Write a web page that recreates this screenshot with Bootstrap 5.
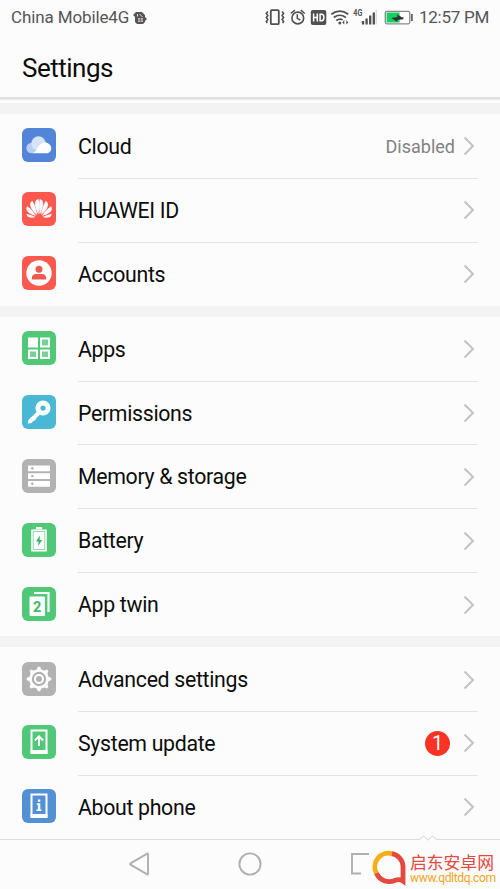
<!DOCTYPE html>
<html lang="en">
<head>
<meta charset="utf-8">
<meta name="viewport" content="width=device-width, initial-scale=1">
<title>Settings</title>
<link href="https://cdn.jsdelivr.net/npm/bootstrap@5.3.0/dist/css/bootstrap.min.css" rel="stylesheet">
<style>
body{font-family:Roboto,"Noto Sans CJK SC",sans-serif;background:#fcfcfc;color:#0c0c0c;width:500px;height:889px;overflow:hidden}
svg{display:block;flex:none}
.status{height:35px;padding:0 11px;font-size:17px;line-height:35px;color:#555}
.carrier{letter-spacing:-.12px}
.clock{width:75px;padding-left:5px;letter-spacing:-.25px}
.page-title{height:62px;padding-left:22px;font-size:26px;line-height:66px;font-weight:400;letter-spacing:-.5px}
.title-rule{height:3px;background:#dfdfdf;border-bottom:1px solid #ececec}
.title-space{height:3px}
.gap-band{height:11px;background:#f3f3f3}
.setting{height:63.9px;padding-left:22px;font-size:21.3px;letter-spacing:-.32px}
.setting .body{margin-left:22px;margin-right:22px;padding-right:3px;height:100%;border-top:1px solid #e4e4e4}
.setting:first-child .body{border-top-color:transparent}
.setting .label{padding-top:1px}
.app-icon{width:34px;height:34px;margin-top:-1px}
.state{font-size:18px;letter-spacing:0;color:#828282;margin-right:8px;padding-top:1px}
.count{width:25px;height:25px;font-size:20px;background:#fa3325;margin-right:13px}
.navkeys{height:50px;border-top:1px solid #dedede}
.key-back{margin-left:128px}.key-home{margin-left:88px}.key-recent{margin-left:88px}
.peak{left:418px;top:-6px}
.site{left:369px;top:8px;width:131px;height:41px;background:#fcfcfc}
.site-text{margin-left:3px;padding-top:5px}
.site-name{font-size:16.8px;line-height:20px;color:#e4483f;white-space:nowrap}
.site-url{font-size:12px;line-height:11px;letter-spacing:-.33px;color:#f0a51c;white-space:nowrap}
</style>
<script src="https://cdn.jsdelivr.net/npm/bootstrap@5.3.0/dist/js/bootstrap.bundle.min.js"></script>
</head>
<body>
<svg class="d-none"><symbol id="chev" viewBox="0 0 12 20"><path d="M1.500 1.500 10 10l-8.500 8.500" fill="none" stroke="#c3c3c3" stroke-width="2"/></symbol></svg>
<div class="d-flex flex-column">
<header>
<div class="status d-flex align-items-center">
  <span class="carrier">China Mobile4G</span>
  <svg class="ms-1" width="14" height="14" viewBox="0 0 14 14"><path d="M3 1h6l3 3v2l2 2-2 2v1l-2 2H4l-2-2V6L0 4z" fill="#555"/><path d="M4.500 3v2.500M6.500 3l3 3" stroke="#ddd"/><path d="M5 7h5v4H5z" fill="#bbb"/><path d="M7.500 7v4M5 9h5" stroke="#666" stroke-width=".7"/></svg>
  <svg class="ms-auto" width="149" height="24" viewBox="265.700 5.500 149 24" fill="none" stroke="#505050">
    <rect x="271.500" y="9.700" width="8" height="14" rx="1" stroke-width="1.800"/>
    <path d="M268.500 11l-1.500 2 1.500 2-1.500 2 1.500 2-1.500 2 1 1.500M282.800 11l1.500 2-1.500 2 1.500 2-1.500 2 1.500 2-1 1.500" stroke-width="1.600"/>
    <circle cx="298.500" cy="17.500" r="5.900" stroke-width="1.600"/><path d="M298 13.800v4l3 1.800M291.500 13l4-3.400M305.500 13l-4-3.400" stroke-width="1.500"/>
    <rect x="311.500" y="9.500" width="15.500" height="15" rx="2" fill="#505050" stroke="none"/>
    <path d="M314.300 13v8M318 13v8M314.300 17h3.700M320.800 13.800h1.500q2.300 0 2.300 3.200t-2.300 3.200h-1.500z" stroke="#fff" stroke-width="1.500"/>
    <path d="M332 13.800q8.500-6.400 17 0M334.500 17q6-4.500 12 0M337 20q3.500-2.500 6.300-.6" stroke-width="1.700"/>
    <circle cx="340.500" cy="22.500" r="1.500" fill="#505050" stroke="none"/><path d="M345 19.500l-2 2.500 2 2zM347 19.500l2 2.500-2 2z" fill="#505050" stroke="none"/>
    <text x="354" y="15.500" font-size="9" font-weight="700" font-family="Roboto" textLength="9" lengthAdjust="spacingAndGlyphs" fill="#505050" stroke="none">4G</text>
    <path d="M363.700 20.500v3.500M367.300 18v6M370.900 15v9M374.500 12v12" stroke-width="2.300"/><path d="M377 9v15" stroke="#ddd" stroke-width="1.500"/>
    <rect x="386" y="10.800" width="24.500" height="12.500" rx="1.500" stroke="#888" stroke-width="1.300"/><path d="M387.300 12h13v10h-13z" fill="#16cf60" stroke="none"/><path d="M392 17.500l6-1v-2.500l5 3 1-.8v2.600l-6 .6v2z" fill="#333" stroke="none"/><path d="M412.600 13.500v7" stroke="#666" stroke-width="1.800"/>
  </svg>
  <span class="clock text-nowrap">12:57 PM</span>
</div>
<h1 class="page-title m-0">Settings</h1>
<div class="title-rule"></div>
</header>
<main>
<div class="title-space"></div>
<div class="gap-band"></div>
<section>
  <div class="setting d-flex align-items-center"><svg class="app-icon" viewBox="0 0 34 34"><rect width="34" height="34" rx="6" fill="#5284d8"/><circle cx="9.500" cy="20" r="5.200" fill="#b8cef2"/><circle cx="16.500" cy="15.500" r="7.200" fill="#d7e4f8"/><path d="M9.500 25.200C13 25 14 22 16 19s5.500-5.500 9-4.300c2.500 1 4.300 3 4.300 5.500 0 3-2.300 5-5.300 5z" fill="#fff"/></svg>
    <div class="body d-flex align-items-center flex-grow-1"><span class="label me-auto">Cloud</span><span class="state">Disabled</span><svg width="12" height="20"><use href="#chev"/></svg></div></div>
  <div class="setting d-flex align-items-center"><svg class="app-icon" viewBox="0 0 34 34"><rect width="34" height="34" rx="6" fill="#fb584e"/><g fill="#fff"><g id="petals"><path d="M16.500 22.500C13.500 17 11.500 10.500 14.500 8c1-.8 2-.8 2.100-.8.700 4 .6 10-.1 15.300z"/><path d="M15.200 23C10.500 19.500 7.500 14.500 8.300 11.500c.3-1.500 1.500-2.300 2.200-2.600 2.500 4 4 9 4.700 14.100z"/><path d="M14.200 24C8.500 22.500 4.500 20 4.300 16.800c0-1.300.5-2 1-2.600 3.500 2.500 6.900 6.300 8.900 9.800z"/><path d="M13.500 25c-3 .9-6.500 1.300-8-.7-.8-.9-.9-1.800-.9-2.600 3 .9 6.400 2 8.900 3.300z"/></g><use href="#petals" transform="translate(34.200 0) scale(-1 1)"/></g></svg>
    <div class="body d-flex align-items-center flex-grow-1"><span class="label me-auto">HUAWEI ID</span><svg width="12" height="20"><use href="#chev"/></svg></div></div>
  <div class="setting d-flex align-items-center"><svg class="app-icon" viewBox="0 0 34 34"><rect width="34" height="34" rx="6" fill="#fb584e"/><circle cx="17" cy="17" r="12.700" fill="#fff"/><circle cx="17" cy="13.300" r="3.500" fill="#ee5a50"/><path d="M9.800 23.500v-1.700c0-2.300 2-3.800 4-3.800h6.400c2 0 4 1.500 4 3.800v1.700z" fill="#ee5a50"/></svg>
    <div class="body d-flex align-items-center flex-grow-1"><span class="label me-auto">Accounts</span><svg width="12" height="20"><use href="#chev"/></svg></div></div>
</section>
<div class="gap-band"></div>
<section>
  <div class="setting d-flex align-items-center"><svg class="app-icon" viewBox="0 0 34 34"><rect width="34" height="34" rx="6" fill="#50c878"/><path d="M6 6.500h10v10H6z" fill="#fff"/><path d="M19 7.500h8v8h-8zM7 19.500h8v7.500H7zM19 19.500h8v7.500h-8z" fill="#7acf99" stroke="#fff" stroke-width="2"/></svg>
    <div class="body d-flex align-items-center flex-grow-1"><span class="label me-auto">Apps</span><svg width="12" height="20"><use href="#chev"/></svg></div></div>
  <div class="setting d-flex align-items-center"><svg class="app-icon" viewBox="0 0 34 34"><rect width="34" height="34" rx="6" fill="#48b8d5"/><circle cx="21" cy="13" r="5.100" fill="none" stroke="#fff" stroke-width="5"/><path d="M17 17.500 8 26.500" stroke="#fff" stroke-width="4"/><path d="M6.500 25l3.500-3.500 4.500 2.500-2.800 2-1-.5-1.800 2.800-3.200.3z" fill="#fff"/></svg>
    <div class="body d-flex align-items-center flex-grow-1"><span class="label me-auto">Permissions</span><svg width="12" height="20"><use href="#chev"/></svg></div></div>
  <div class="setting d-flex align-items-center"><svg class="app-icon" viewBox="0 0 34 34"><rect width="34" height="34" rx="6" fill="#b2b2b2"/><g fill="#fff"><rect x="6" y="6.500" width="22" height="5.700" rx=".6"/><rect x="6" y="14.300" width="22" height="5.700" rx=".6"/><rect x="6" y="22" width="22" height="5.700" rx=".6"/></g><g fill="#aaa"><circle cx="10.300" cy="9.300" r="1.200"/><circle cx="10.300" cy="17.100" r="1.200"/><circle cx="10.300" cy="24.800" r="1.200"/></g></svg>
    <div class="body d-flex align-items-center flex-grow-1"><span class="label me-auto">Memory &amp; storage</span><svg width="12" height="20"><use href="#chev"/></svg></div></div>
  <div class="setting d-flex align-items-center"><svg class="app-icon" viewBox="0 0 34 34"><rect width="34" height="34" rx="6" fill="#50c878"/><path d="M14 4h6v2.200h-6zM9.200 6.500h15.600v22H9.200z" fill="#fff"/><path d="M11.200 8.500h11.600v18H11.200z" fill="none" stroke="#8fd8aa" stroke-width="1"/><path d="M17.800 12.500 14 18.500h2.500l-.3 4.500 3.900-6h-2.500z" fill="#3eae68"/></svg>
    <div class="body d-flex align-items-center flex-grow-1"><span class="label me-auto">Battery</span><svg width="12" height="20"><use href="#chev"/></svg></div></div>
  <div class="setting d-flex align-items-center"><svg class="app-icon" viewBox="0 0 34 34"><rect width="34" height="34" rx="6" fill="#50c878"/><path d="M12 6h14.500v19" fill="none" stroke="#fff" stroke-width="2.200"/><rect x="7.500" y="9.500" width="15.500" height="19.500" rx="1" fill="#fff"/><text x="15" y="24.500" text-anchor="middle" font-family="Roboto" font-weight="700" font-size="14.500" fill="#42b66c">2</text></svg>
    <div class="body d-flex align-items-center flex-grow-1"><span class="label me-auto">App twin</span><svg width="12" height="20"><use href="#chev"/></svg></div></div>
</section>
<div class="gap-band"></div>
<section>
  <div class="setting d-flex align-items-center"><svg class="app-icon" viewBox="0 0 34 34"><rect width="34" height="34" rx="6" fill="#b2b2b2"/><circle cx="17" cy="17" r="8.500" fill="none" stroke="#fff" stroke-width="2.600"/><circle cx="17" cy="17" r="4" fill="none" stroke="#fff" stroke-width="2"/><g fill="#fff"><path id="cog" d="M14.200 8.500 16 4.700h2l1.800 3.800z"/><use href="#cog" transform="rotate(45 17 17)"/><use href="#cog" transform="rotate(90 17 17)"/><use href="#cog" transform="rotate(135 17 17)"/><use href="#cog" transform="rotate(180 17 17)"/><use href="#cog" transform="rotate(225 17 17)"/><use href="#cog" transform="rotate(270 17 17)"/><use href="#cog" transform="rotate(315 17 17)"/></g></svg>
    <div class="body d-flex align-items-center flex-grow-1"><span class="label me-auto">Advanced settings</span><svg width="12" height="20"><use href="#chev"/></svg></div></div>
  <div class="setting d-flex align-items-center"><svg class="app-icon" viewBox="0 0 34 34"><rect width="34" height="34" rx="6" fill="#50c878"/><path d="M9.500 5.500h15v22h-15z" fill="none" stroke="#fff" stroke-width="2"/><path d="M8.500 25h17v4h-17z" fill="#fff"/><path d="M17 21v-9M12.800 15.500 17 11.300l4.200 4.200" fill="none" stroke="#fff" stroke-width="2"/></svg>
    <div class="body d-flex align-items-center flex-grow-1"><span class="label me-auto">System update</span><span class="count badge rounded-circle p-0 d-flex align-items-center justify-content-center fw-normal">1</span><svg width="12" height="20"><use href="#chev"/></svg></div></div>
  <div class="setting d-flex align-items-center"><svg class="app-icon" viewBox="0 0 34 34"><rect width="34" height="34" rx="6" fill="#5490d4"/><path d="M9.500 5.500h15v22h-15z" fill="none" stroke="#fff" stroke-width="2"/><path d="M8.500 25h17v4h-17z" fill="#fff"/><path d="M15.900 10.500h2.400v2.300h-2.400zM14.800 14.200h3.500v6.300h1.200V22h-5v-1.500h1.400v-4.800h-1.100z" fill="#fff"/></svg>
    <div class="body d-flex align-items-center flex-grow-1"><span class="label me-auto">About phone</span><svg width="12" height="20"><use href="#chev"/></svg></div></div>
</section>
</main>
<footer class="navkeys d-flex align-items-center position-relative">
  <svg class="key-back" width="22" height="24" viewBox="0 0 22 24"><path d="M20 2v20q0 .8-.8.400L2.500 12.600q-.8-.6 0-1.200L19.200 1.600q.8-.4.800.4z" fill="none" stroke="#b0b0b0" stroke-width="1.900"/></svg>
  <svg class="key-home" width="24" height="24" viewBox="0 0 24 24"><circle cx="12" cy="12" r="10.600" fill="none" stroke="#b0b0b0" stroke-width="1.900"/></svg>
  <svg class="key-recent" width="22" height="24" viewBox="0 0 22 24"><path d="M22 2H2v19.500h9" fill="none" stroke="#b0b0b0" stroke-width="1.900"/></svg>
  <svg class="peak position-absolute" width="20" height="8" viewBox="0 0 20 8"><path d="M1 6 5.500 2 10 6l4.500-4L19 6" fill="#fcfcfc" stroke="#e2e2e2" stroke-width="1.200"/></svg>
  <div class="site position-absolute d-flex">
    <svg width="38" height="41" viewBox="369 848 38 41" fill="none" stroke-width="4.800"><path d="M376.500 873.500a13.700 13.700 0 0 1 16-19.700" stroke="#f7ad13"/><path d="M392 853.600a13.700 13.700 0 0 1 11 12.400v15q-3.500-2.500-8-.7a13.700 13.700 0 0 1-18.500-7" stroke="#e4483f"/></svg>
    <div class="site-text"><div class="site-name">启东安卓网</div><div class="site-url">www.qdltdq.com</div></div>
  </div>
</footer>
</div>
</body>
</html>
